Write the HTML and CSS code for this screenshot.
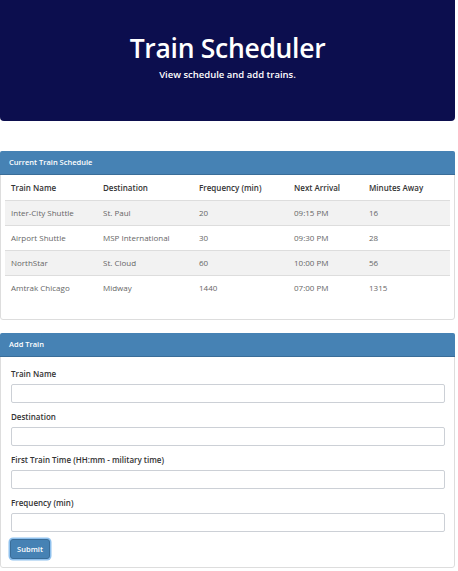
FILE: index.html
```html
<!DOCTYPE html>
<html>
<head>
<meta charset="utf-8">
<title>Train Scheduler</title>
<link rel="stylesheet" href="styles.css">
</head>
<body>
<div class="container">
  <header class="jumbotron">
    <h1 class="title">Train Scheduler</h1>
    <p class="subtitle">View schedule and add trains.</p>
  </header>

  <section class="panel schedule">
    <div class="panel-heading">Current Train Schedule</div>
    <div class="panel-body">
      <table class="table">
        <thead>
          <tr><th class="c1">Train Name</th><th class="c2">Destination</th><th class="c3">Frequency (min)</th><th class="c4">Next Arrival</th><th class="c5">Minutes Away</th></tr>
        </thead>
        <tbody>
          <tr><td>Inter-City Shuttle</td><td>St. Paul</td><td>20</td><td>09:15 PM</td><td>16</td></tr>
          <tr><td>Airport Shuttle</td><td>MSP International</td><td>30</td><td>09:30 PM</td><td>28</td></tr>
          <tr><td>NorthStar</td><td>St. Cloud</td><td>60</td><td>10:00 PM</td><td>56</td></tr>
          <tr><td>Amtrak Chicago</td><td>Midway</td><td>1440</td><td>07:00 PM</td><td>1315</td></tr>
        </tbody>
      </table>
    </div>
  </section>

  <section class="panel add">
    <div class="panel-heading">Add Train</div>
    <form class="form">
      <div class="group"><label class="label">Train Name</label><input class="input" type="text"></div>
      <div class="group"><label class="label">Destination</label><input class="input" type="text"></div>
      <div class="group"><label class="label">First Train Time (HH:mm - military time)</label><input class="input" type="text"></div>
      <div class="group"><label class="label">Frequency (min)</label><input class="input" type="text"></div>
      <button class="btn" type="button">Submit</button>
    </form>
  </section>
</div>
</body>
</html>
```
FILE: styles.css
```css
* { box-sizing: border-box; }
html, body { margin: 0; padding: 0; background: #fff; }
body {
  font-family: "Open Sans", "Noto Sans", sans-serif;
  color: #333;
  font-size: 8px;
}
.container { width: 455px; }

.jumbotron {
  height: 121px;
  background: #0c0e4e;
  border-radius: 0 0 4px 4px;
  color: #fff;
  text-align: center;
  padding-top: 31px;
}
.title {
  margin: 0;
  font-size: 26.5px;
  font-weight: 600;
  line-height: 34px;
  letter-spacing: -0.3px;
}
.subtitle {
  margin: 4px 0 0;
  font-size: 9.5px;
  font-weight: 600;
  line-height: 12px;
}

.panel {
  border: 1px solid #ddd;
  border-radius: 3px;
  background: #fff;
}
.schedule { margin-top: 30px; height: 169px; }
.add { margin-top: 13px; height: 235px; }
.panel-heading {
  height: 24px;
  background: #4682b4;
  border-bottom: 1px solid #3a6d98;
  color: #fff;
  font-size: 7.5px;
  font-weight: 600;
  line-height: 23px;
  padding-left: 9px;
  border-radius: 2px 2px 0 0;
  margin: -1px -1px 0;
}
.panel-body { padding: 0 4px; }

.table { width: 445px; border-collapse: collapse; table-layout: fixed; }
.table th, .table td {
  height: 25px;
  padding: 0 6px;
  text-align: left;
  vertical-align: middle;
  white-space: nowrap;
}
.table th { font-weight: 600; color: #333; border-bottom: 1px solid #ddd; }
.table td { color: #666; border-bottom: 1px solid #ddd; }
.table tbody tr:last-child td { border-bottom: none; }
.table tbody tr:nth-child(odd) td { background: #f2f2f2; }
.c1 { width: 92px; }
.c2 { width: 96px; }
.c3 { width: 95px; }
.c4 { width: 75px; }
.c5 { width: 87px; }

.form { padding: 10px 10px 0 9px; }
.group { display: flex; flex-direction: column; margin-bottom: 7px; }
.label { font-weight: 600; color: #333; line-height: 14px; margin-bottom: 3px; padding-left: 1px; }
.input {
  margin-left: 1px;
  height: 19px;
  width: 434px;
  border: 1px solid #ccd0d6;
  border-radius: 2px;
  background: #fff;
  font: inherit;
}
.btn {
  margin-top: 0;
  width: 40px;
  height: 20px;
  background: #4682b4;
  color: #fff;
  border: 1px solid #3a6d98;
  border-radius: 3px;
  box-shadow: 0 0 0 1.5px #8fc1ee;
  font-family: inherit;
  font-size: 7.5px;
  font-weight: 600;
  padding: 0;
}
```
